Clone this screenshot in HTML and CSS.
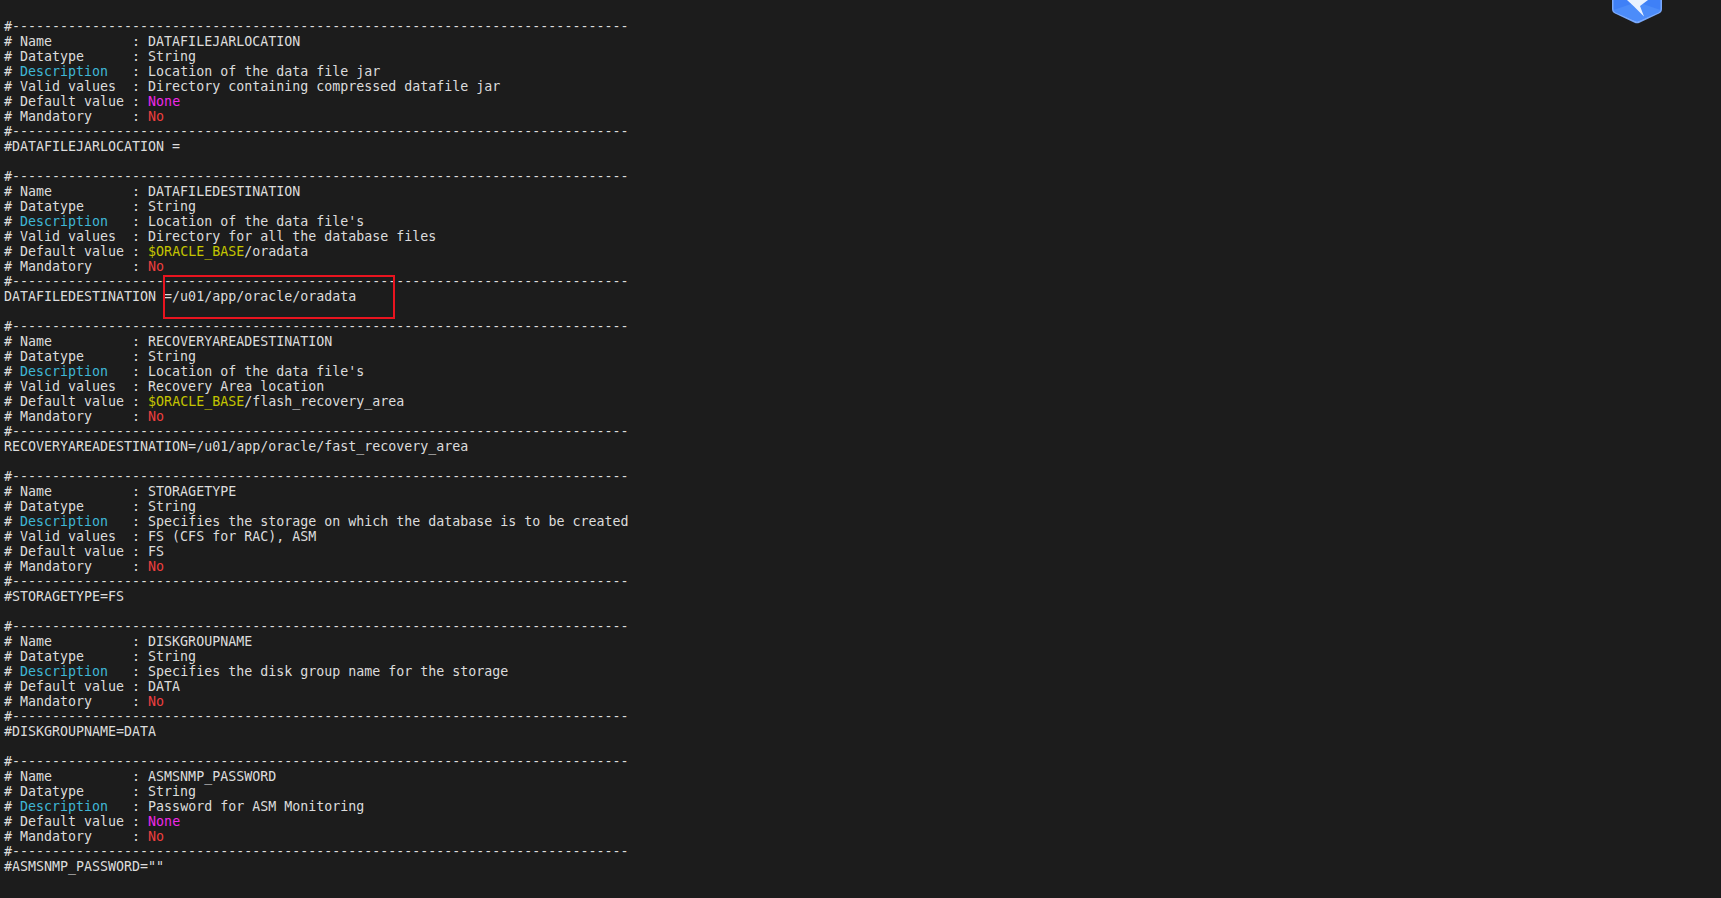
FILE: index.html
```html
<!DOCTYPE html>
<html lang="en">
<head>
<meta charset="utf-8">
<title>Terminal</title>
<link rel="stylesheet" href="styles.css">
</head>
<body>
<main class="terminal">
<pre class="output">#-----------------------------------------------------------------------------
# Name          : DATAFILEJARLOCATION
# Datatype      : String
# <span class="cyan">Description</span>   : Location of the data file jar
# Valid values  : Directory containing compressed datafile jar
# Default value : <span class="magenta">None</span>
# Mandatory     : <span class="red">No</span>
#-----------------------------------------------------------------------------
#DATAFILEJARLOCATION =

#-----------------------------------------------------------------------------
# Name          : DATAFILEDESTINATION
# Datatype      : String
# <span class="cyan">Description</span>   : Location of the data file's
# Valid values  : Directory for all the database files
# Default value : <span class="yellow">$ORACLE_BASE</span>/oradata
# Mandatory     : <span class="red">No</span>
#-----------------------------------------------------------------------------
DATAFILEDESTINATION =/u01/app/oracle/oradata

#-----------------------------------------------------------------------------
# Name          : RECOVERYAREADESTINATION
# Datatype      : String
# <span class="cyan">Description</span>   : Location of the data file's
# Valid values  : Recovery Area location
# Default value : <span class="yellow">$ORACLE_BASE</span>/flash_recovery_area
# Mandatory     : <span class="red">No</span>
#-----------------------------------------------------------------------------
RECOVERYAREADESTINATION=/u01/app/oracle/fast_recovery_area

#-----------------------------------------------------------------------------
# Name          : STORAGETYPE
# Datatype      : String
# <span class="cyan">Description</span>   : Specifies the storage on which the database is to be created
# Valid values  : FS (CFS for RAC), ASM
# Default value : FS
# Mandatory     : <span class="red">No</span>
#-----------------------------------------------------------------------------
#STORAGETYPE=FS

#-----------------------------------------------------------------------------
# Name          : DISKGROUPNAME
# Datatype      : String
# <span class="cyan">Description</span>   : Specifies the disk group name for the storage
# Default value : DATA
# Mandatory     : <span class="red">No</span>
#-----------------------------------------------------------------------------
#DISKGROUPNAME=DATA

#-----------------------------------------------------------------------------
# Name          : ASMSNMP_PASSWORD
# Datatype      : String
# <span class="cyan">Description</span>   : Password for ASM Monitoring
# Default value : <span class="magenta">None</span>
# Mandatory     : <span class="red">No</span>
#-----------------------------------------------------------------------------
#ASMSNMP_PASSWORD=""</pre>
<div class="highlight"></div>
<svg class="logo" viewBox="0 0 50 24" width="50" height="24" aria-hidden="true">
  <path d="M0 -6H50V9Q50 12 47 13.5L27.5 22.7Q25 23.8 22.5 22.7L3 13.5Q0 12 0 9Z" fill="#7aa9fb"/>
  <path d="M1.5 -6H48.5V9Q48.5 11 46.5 12.2L26.5 21Q25 21.7 23.5 21L3.5 12.2Q1.5 11 1.5 9Z" fill="#3f80f7"/>
  <path d="M1.5 10L25 2L48.5 10Q48.5 11 46.5 12.2L26.5 21Q25 21.7 23.5 21L3.5 12.2Q1.5 11 1.5 10Z" fill="#4c8cf9"/>
  <path d="M15 0H36L28 6L32 16.5L22 6.5Z" fill="#e9f1fe"/>
</svg>
</main>
</body>
</html>
```

FILE: styles.css
```css
html, body {
  margin: 0;
  height: 100%;
  background: #1c1c1c;
  overflow: hidden;
}

.terminal {
  position: relative;
  height: 100%;
  padding: 19px 0 0 4px;
  box-sizing: border-box;
}

.output {
  margin: 0;
  font-family: "DejaVu Sans Mono", monospace;
  font-size: 13.3px;
  line-height: 15px;
  color: #dcdcdc;
}

.cyan { color: #3fb6d6; }
.magenta { color: #f028e8; }
.red { color: #ef3f3f; }
.yellow { color: #c4c400; }

.highlight {
  position: absolute;
  left: 163px;
  top: 275px;
  width: 232px;
  height: 44px;
  border: 2px solid #e8141f;
  box-sizing: border-box;
}

.logo {
  position: absolute;
  left: 1612px;
  top: 0;
}
```
